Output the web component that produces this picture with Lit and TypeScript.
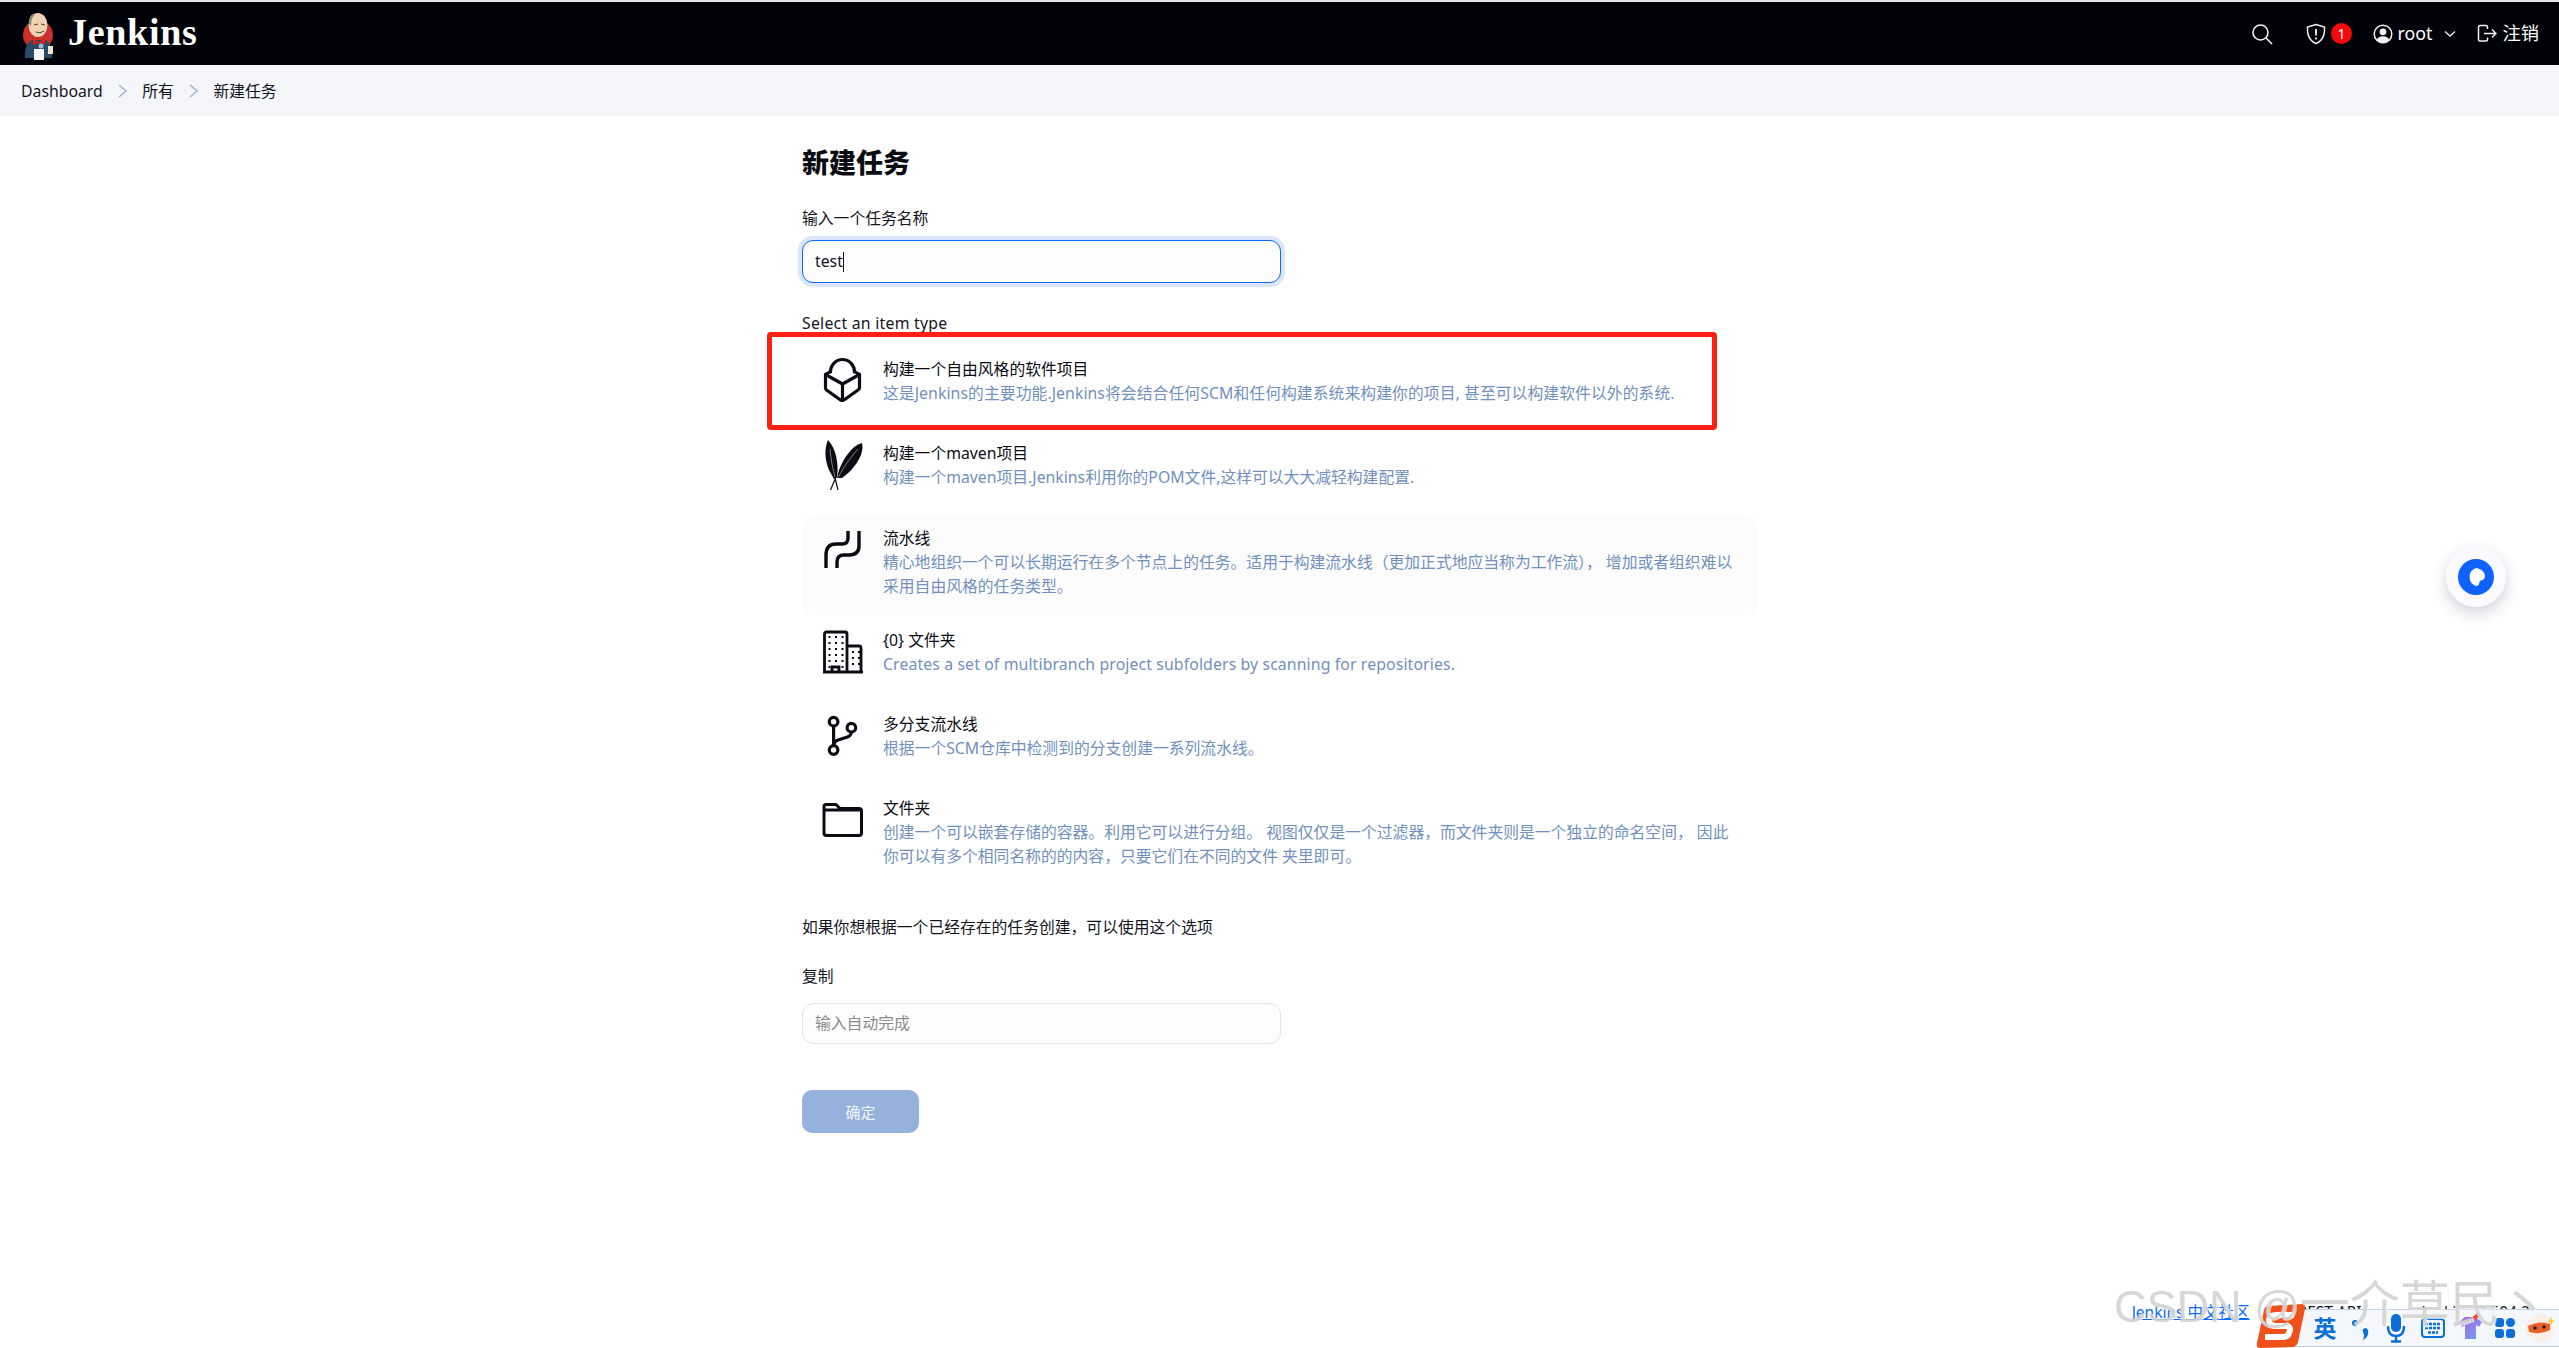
import { LitElement, html, css, svg } from "lit";
import { customElement } from "lit/decorators.js";

const DOTS_BIG = [5, 11, 17, 23, 29, 35].flatMap((y) => [6.5, 13, 19.5].map((x) => [x, y]));
const DOTS_SMALL = [23, 29, 35].flatMap((y) => [30, 36].map((x) => [x, y]));

const ICONS: Record<string, unknown> = {
  box: svg`<g fill="none" stroke="#0b0b14" stroke-width="3.2" stroke-linejoin="round" stroke-linecap="round">
    <path d="M8.5 14.5 L3.5 17.5 V31 Q3.5 32 4.5 33 L18.5 43 Q20.5 44 22 43 L36 33 Q37.5 32 37.5 31 V17.5 L32.5 14.5"/>
    <path d="M8.5 15 A12 12.5 0 0 1 32.5 15"/>
    <path d="M3.5 17.5 L20.5 27 L37.5 17.5 M20.5 27 V43"/></g>`,
  feather: svg`<g fill="#0b0b14">
    <path d="M6 -1 C2 8 3 20 7 29 L12 38 L15 36 C17 24 14 7 6 -1 Z"/>
    <path d="M40 2 C31 4 22 16 17 29 L15 37 L20 37 C30 30 43 15 40 2 Z"/></g>
    <g fill="none" stroke="#9a9a9a" stroke-width="0.8"><path d="M8 8 C9 20 11 28 13 36"/><path d="M36 8 C28 17 21 27 16.5 36"/></g>
    <path d="M14 36 L8.5 49 M13 37 L16 49" stroke="#0b0b14" stroke-width="1.2" fill="none"/>`,
  pipeline: svg`<g fill="none" stroke="#0b0b14" stroke-width="3.4">
    <path d="M4 42 V29 Q4 18 14 18 H20 Q26 18 26 12 V5"/>
    <path d="M15 42 V36 Q15 29 22 29 H27 Q37 29 37 20 V5"/></g>`,
  building: svg`<g fill="none" stroke="#0b0b14" stroke-width="2.8">
    <path d="M2.5 44 V6 Q2.5 4 4.5 4 H23 Q25 4 25 6 V44"/>
    <path d="M25 18 H37 Q39 18 39 20 V44"/>
    <path d="M1 44 H41"/>
    <path d="M10 44 V39 H17 V44"/></g>
    <g fill="#0b0b14" stroke="none">
    ${DOTS_BIG.map(([x, y]) => svg`<rect x=${x} y=${y + 3} width="2" height="2"/>`)}
    ${DOTS_SMALL.map(([x, y]) => svg`<rect x=${x} y=${y} width="2" height="2"/>`)}</g>`,
  branch: svg`<g fill="none" stroke="#0b0b14" stroke-width="3.2">
    <circle cx="11.6" cy="9.7" r="4.3"/><circle cx="11.6" cy="38" r="4.3"/><circle cx="29.4" cy="15.7" r="4.3"/>
    <path d="M11.6 14 V33.5"/><path d="M29.4 20 Q29.4 24 24 25.5 L16 28 Q12 29.5 11.6 33"/></g>`,
  folder: svg`<path fill="none" stroke="#0b0b14" stroke-width="3" stroke-linejoin="round"
    d="M2 10.5 Q2 8.5 4 8.5 H14 L18 12.5 H37 Q39.5 12.5 39.5 15 V37 Q39.5 39.5 37 39.5 H4.5 Q2 39.5 2 37 Z M2 14 H39.5"/>`,
};

const ITEMS = [
  { icon: "box", cls: "wide1", title: "构建一个自由风格的软件项目", desc: "这是Jenkins的主要功能.Jenkins将会结合任何SCM和任何构建系统来构建你的项目, 甚至可以构建软件以外的系统." },
  { icon: "feather", title: "构建一个maven项目", desc: "构建一个maven项目.Jenkins利用你的POM文件,这样可以大大减轻构建配置." },
  { icon: "pipeline", hover: true, title: "流水线", desc: "精心地组织一个可以长期运行在多个节点上的任务。适用于构建流水线（更加正式地应当称为工作流）， 增加或者组织难以采用自由风格的任务类型。" },
  { icon: "building", cls: "wide2", title: "{0} 文件夹", desc: "Creates a set of multibranch project subfolders by scanning for repositories." },
  { icon: "branch", title: "多分支流水线", desc: "根据一个SCM仓库中检测到的分支创建一系列流水线。" },
  { icon: "folder", title: "文件夹", desc: "创建一个可以嵌套存储的容器。利用它可以进行分组。 视图仅仅是一个过滤器，而文件夹则是一个独立的命名空间， 因此你可以有多个相同名称的的内容，只要它们在不同的文件 夹里即可。" },
];

@customElement("app-root")
export class AppRoot extends LitElement {
  static styles = css`
    :host {
      display: flex;
      flex-direction: column;
      position: relative;
      min-height: 100vh;
      overflow: hidden;
      background: #fff;
      color: #14141f;
      font-family: "Noto Sans", "Noto Sans CJK SC", sans-serif;
      font-size: 15.8px;
      line-height: 24px;
    }
    .strip { height: 2px; background: #e4e4e4; }
    .header {
      height: 63px;
      background: #01010a;
      color: #fff;
      display: flex;
      align-items: center;
      padding: 0 20px 0 21px;
    }
    .logo { width: 36px; height: 52px; margin-right: 11px; flex: none; }
    .brand {
      font-family: "Liberation Serif", serif;
      font-weight: 700;
      font-size: 38px;
      letter-spacing: 0.7px;
      padding-bottom: 4px;
    }
    .nav { margin-left: auto; display: flex; align-items: center; font-size: 17.8px; }
    .nav svg { flex: none; display: block; }
    .search { margin-right: 33px; }
    .badge {
      width: 21px;
      height: 21px;
      border-radius: 50%;
      background: #f30a0a;
      color: #fff;
      font-size: 14px;
      display: flex;
      align-items: center;
      justify-content: center;
      margin: 0 20.5px 0 5px;
    }
    .root { margin: 0 12px 0 5px; padding-bottom: 2px; }
    .chev { margin-right: 21px; }
    .logout { margin-right: 5px; }
    .bye { font-size: 18.3px; padding-bottom: 2px; }
    .crumbs {
      height: 51px;
      background: #f5f6fa;
      display: flex;
      align-items: center;
      padding-left: 21px;
    }
    .crumbs svg { margin: 0 15px 0 15.5px; display: block; }
    .main {
      width: 956px;
      margin-left: 802px;
      padding-top: 27px;
    }
    h1 { margin: 0 0 23px; font-size: 27px; line-height: 40px; font-weight: 900; color: #0b0b14; }
    .label { margin-bottom: 10px; }
    .field {
      position: relative;
      box-sizing: border-box;
      width: 479px;
      height: 43px;
      display: block;
      font: inherit;
      padding: 0 12px 2px;
      border-radius: 11px;
      background: #fdfdfe;
      color: #14141f;
      outline: none;
    }
    .wrap { position: relative; width: 479px; }
    .focus { border: 1.5px solid #0b6aff; box-shadow: 0 0 0 4px #d9e6fd; }
    .caret {
      position: absolute;
      left: 41px;
      top: 12px;
      width: 1px;
      height: 20px;
      background: #14141f;
    }
    .select { margin: 28px 0 10px; letter-spacing: 0.25px; }
    .list { position: relative; }
    .mark {
      position: absolute;
      left: -35px;
      top: -13px;
      width: 950px;
      height: 98px;
      box-sizing: border-box;
      border: 5px solid #ff2012;
      border-radius: 4px;
      pointer-events: none;
    }
    .row {
      box-sizing: border-box;
      min-height: 84.3px;
      padding: 12px 18px 18px 20px;
      display: flex;
      border-radius: 12px;
    }
    .row.hover { background: #fcfcfd; }
    .row svg { width: 44px; height: 52px; flex: none; margin-right: 17px; overflow: visible; display: block; }
    .title { color: #0b0b14; }
    .desc { color: #7190bd; }
    .wide1 .desc { letter-spacing: 0.07px; }
    .wide2 .desc { letter-spacing: 0.12px; }
    .hint { margin: 29px 0 25px; }
    .copy-label { margin-bottom: 15px; }
    .plain { border: 1.5px solid #e0e3f0; height: 41px; }
    .plain::placeholder { color: #8a8a8a; opacity: 1; }
    .btn {
      margin-top: 46px;
      width: 117px;
      height: 43px;
      border: none;
      border-radius: 10px;
      background: #95b2dc;
      color: #f2f5fb;
      font: inherit;
      font-size: 15px;
      padding: 0;
      display: block;
    }
    .footer {
      margin-top: auto;
      height: 48px;
      box-sizing: border-box;
      padding: 0 29px 0 0;
      display: flex;
      justify-content: flex-end;
      gap: 48px;
      font-size: 15.5px;
    }
    .footer a { color: #0b6aff; text-decoration: underline; }
    .version { margin-left: 12px; }
    .float {
      position: absolute;
      left: 2446px;
      top: 547px;
      width: 60px;
      height: 60px;
      border-radius: 50%;
      background: #fbfbff;
      box-shadow: 0 6px 16px rgba(40, 50, 90, 0.22);
      display: flex;
      align-items: center;
      justify-content: center;
    }
    .ime {
      position: absolute;
      left: 2276px;
      right: 0;
      top: 1309px;
      height: 38px;
      box-sizing: border-box;
      background: #f4f7fc;
      border-top: 1.5px solid #c3d2e6;
      border-bottom: 1.5px solid #c3d2e6;
      display: flex;
      align-items: center;
      padding-left: 37.5px;
      color: #0a6fd8;
    }
    .ime b { font-size: 23px; width: 30px; line-height: 30px; margin-right: 3.5px; }
    .ime svg { display: block; flex: none; overflow: visible; }
    .gap11 { margin-right: 11px; }
    .gap13 { margin-right: 13px; }
    .gap10 { margin-right: 10px; }
    .sogou { position: absolute; left: 2256px; top: 1304px; width: 50px; height: 44px; }
    .water {
      position: absolute;
      left: 2114px;
      top: 1270px;
      white-space: nowrap;
      font-family: "Liberation Sans", sans-serif;
      font-size: 45px;
      line-height: 60px;
      color: rgba(205, 205, 205, 0.8);
      text-shadow: 1px 1px 0 rgba(255, 255, 255, 0.7);
      pointer-events: none;
    }
    .water span { font-family: "Noto Sans CJK SC", sans-serif; font-size: 50px; }
  `;

  render() {
    return html`
      <div class="strip"></div>
      <header class="header">
        <svg class="logo" viewBox="0 0 36 52">
          <circle cx="17" cy="27" r="15" fill="#c8302b"/>
          <path d="M4 50 Q3 36 11 32 L25 32 Q31 36 31 50 Z" fill="#2a4a68"/>
          <ellipse cx="17" cy="17" rx="9.5" ry="12" fill="#efd4b4"/>
          <path d="M8 16 Q7 6 15 5 Q10 9 10 18 Z" fill="#8d8478"/>
          <path d="M13 17 L17 16 M20 16 L24 17 M15 24 Q19 26 23 23" stroke="#5a4030" stroke-width="1" fill="none"/>
          <path d="M12 31 L18 34 L24 30 L24 36 L18 35 L12 37 Z" fill="#d8201c"/>
          <circle cx="20" cy="38" r="2.5" fill="#9fb6cb"/>
          <rect x="13" y="41" width="10" height="11" fill="#f4f4f4"/>
          <path d="M27 38 H32 V46 H27 Z" fill="#efe3d2"/>
        </svg>
        <span class="brand">Jenkins</span>
        <div class="nav">
          <svg class="search" width="22" height="22" viewBox="0 0 22 22" fill="none" stroke="#f2f2f2" stroke-width="1.6">
            <circle cx="9.5" cy="9.5" r="7.5"/><path d="M15 15 L21 21"/></svg>
          <svg width="20" height="22" viewBox="0 0 20 22" fill="none" stroke="#f2f2f2" stroke-width="1.5">
            <path d="M10 1.5 L18.5 4 Q19 13 15 17 Q13 19.5 10 20.5 Q7 19.5 5 17 Q1 13 1.5 4 Z"/>
            <path d="M10 6 V12.5 M10 14.5 V16.5" stroke-width="1.8"/></svg>
          <span class="badge">1</span>
          <svg width="20" height="20" viewBox="0 0 20 20" fill="none" stroke="#f2f2f2" stroke-width="1.5">
            <circle cx="10" cy="10" r="8.8"/>
            <circle cx="10" cy="7.8" r="3.4" fill="#f2f2f2" stroke="none"/>
            <path d="M3.8 16 Q5 12.3 10 12.3 Q15 12.3 16.2 16 Q13.5 18.8 10 18.8 Q6.5 18.8 3.8 16 Z" fill="#f2f2f2" stroke="none"/></svg>
          <span class="root">root</span>
          <svg class="chev" width="12" height="8" viewBox="0 0 12 8" fill="none" stroke="#e8e8e8" stroke-width="1.4"><path d="M1 1.5 L6 6 L11 1.5"/></svg>
          <svg class="logout" width="20" height="20" viewBox="0 0 20 20" fill="none" stroke="#f2f2f2" stroke-width="1.5">
            <path d="M10.5 5 V3 Q10.5 1.5 9 1.5 H3 Q1.5 1.5 1.5 3 V15.5 Q1.5 17 3 17 H9 Q10.5 17 10.5 15.5 V13.5"/>
            <path d="M7 9.5 H19 M15 5.5 L19 9.5 L15 13.5"/></svg>
          <span class="bye">注销</span>
        </div>
      </header>
      <nav class="crumbs">
        <span>Dashboard</span>
        ${this.chevron()}
        <span>所有</span>
        ${this.chevron()}
        <span>新建任务</span>
      </nav>
      <main class="main">
        <h1>新建任务</h1>
        <div class="label">输入一个任务名称</div>
        <div class="wrap">
          <input class="field focus" .value=${"test"} />
          <span class="caret"></span>
        </div>
        <div class="select">Select an item type</div>
        <div class="list">
          ${ITEMS.map(
            (it) => html`
              <div class="row ${it.hover ? "hover" : ""} ${it.cls ?? ""}">
                <svg viewBox="0 0 44 52">${ICONS[it.icon]}</svg>
                <div>
                  <div class="title">${it.title}</div>
                  <div class="desc">${it.desc}</div>
                </div>
              </div>
            `
          )}
          <div class="mark"></div>
        </div>
        <div class="hint">如果你想根据一个已经存在的任务创建，可以使用这个选项</div>
        <div class="copy-label">复制</div>
        <input class="field plain" placeholder="输入自动完成" />
        <button class="btn">确定</button>
      </main>
      <footer class="footer">
        <a>Jenkins 中文社区</a>
        <span>REST API</span>
        <span class="version">Jenkins 2.504.2</span>
      </footer>

      <div class="float">
        <svg width="36" height="36" viewBox="0 0 36 36">
          <circle cx="18" cy="18" r="18" fill="#0f62fe"/>
          <path d="M18 9 A9.5 9.5 0 0 0 18 27 Q20 27 21 25.5 Q21 21 25 21 Q27 19.5 27 17 Q26 10 18 9 Z" fill="#fff"/>
        </svg>
      </div>
      <div class="ime">
        <b>英</b>
        <svg class="gap11" width="26" height="28" viewBox="0 0 26 28" fill="#0a6fd8">
          <circle cx="8" cy="9" r="3"/><path d="M18 14 Q22 14 21 20 Q20 24 16 26 Q18 21 16 18 Q15 15 18 14 Z"/></svg>
        <svg class="gap13" width="24" height="30" viewBox="0 0 24 30" fill="none" stroke="#0a6fd8" stroke-width="2.4">
          <rect x="7" y="1" width="10" height="18" rx="5" fill="#0a6fd8" stroke="none"/>
          <path d="M4 13 Q4 23 12 23 Q20 23 20 13 M12 23 V28 M7 28.5 H17"/></svg>
        <svg class="gap13" width="24" height="20" viewBox="0 0 24 20">
          <rect x="1" y="1" width="22" height="18" rx="3" fill="none" stroke="#0a6fd8" stroke-width="2"/>
          <path d="M4 6 H20 M4 10 H20 M7 14.5 H17" stroke="#0a6fd8" stroke-width="2.4" stroke-dasharray="3 1"/></svg>
        <svg class="gap13" width="24" height="26" viewBox="0 0 24 26">
          <defs><linearGradient id="tee" x1="0" y1="0" x2="1" y2="1"><stop offset="0" stop-color="#b25bd8"/><stop offset="1" stop-color="#6aa8f5"/></linearGradient></defs>
          <path d="M7 2 L1 7 L4 12 L7 10 V24 H18 V10 L21 12 L24 7 L17 2 Z" fill="url(#tee)"/>
          <path d="M14 5 L21 -1" stroke="#e5503a" stroke-width="4"/></svg>
        <svg class="gap10" width="20" height="20" viewBox="0 0 20 20" fill="#0a6fd8">
          <rect x="0" y="0" width="9" height="9" rx="3"/><rect x="11" y="0" width="9" height="9" rx="4.5"/>
          <rect x="0" y="11" width="9" height="9" rx="3"/><rect x="11" y="11" width="9" height="9" rx="3"/></svg>
        <svg width="30" height="30" viewBox="0 0 30 30">
          <circle cx="15" cy="15" r="14" fill="#fbeee6"/>
          <path d="M3 13 Q15 7 25 11 L25 17 Q14 22 4 19 Z" fill="#e9602a"/>
          <circle cx="10" cy="15" r="1.8" fill="#222"/><circle cx="19" cy="14" r="1.8" fill="#222"/>
          <path d="M26 3 L27.5 7 L30 8 L27.5 9 L26 13 L24.5 9 L22 8 L24.5 7 Z" fill="#f7d64a"/></svg>
      </div>
      <svg class="sogou" viewBox="0 0 50 44">
        <path d="M8 6 Q9 2 13 2 L46 0 Q50 0 49 5 L42 38 Q41 42 37 43 L4 44 Q0 44 1 39 Z" fill="#f0511a"/>
        <path d="M38 11 H21 Q12 11 13 17 Q14 22 22 22 H30 Q36 23 33 29 Q32 33 26 33 H9" fill="none" stroke="#fff" stroke-width="6"/>
      </svg>
      <div class="water">CSDN @<span>一介草民丶</span></div>
    `;
  }

  private chevron() {
    return html`<svg width="9" height="14" viewBox="0 0 9 14" fill="none" stroke="#a3b5d3" stroke-width="1.5"><path d="M1 1 L8 7 L1 13"/></svg>`;
  }
}
